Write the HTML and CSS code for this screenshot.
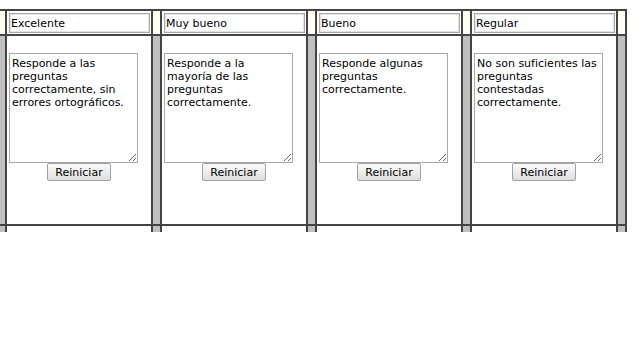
FILE: index.html
```html
<!DOCTYPE html>
<html lang="es">

<head>
    <meta charset="UTF-8" />
    <meta name="viewport" content="width=device-width, initial-scale=1.0" />
    <title>Rúbrica</title>
    <link rel="stylesheet" href="styles.css">
</head>

<body>
    <div class="board">
        <table class="rubric">
            <colgroup>
                <col class="gap" />
                <col class="level" />
                <col class="gap" />
                <col class="level" />
                <col class="gap" />
                <col class="level" />
                <col class="gap" />
                <col class="level" />
                <col class="gap" />
            </colgroup>
            <tr class="rubric-head">
                <td class="gap"></td>
                <td><input type="text" value="Excelente" /></td>
                <td class="gap"></td>
                <td><input type="text" value="Muy bueno" /></td>
                <td class="gap"></td>
                <td><input type="text" value="Bueno" /></td>
                <td class="gap"></td>
                <td><input type="text" value="Regular" /></td>
                <td class="gap"></td>
            </tr>
            <tr class="rubric-body">
                <td class="gap"></td>
                <td>
                    <textarea>Responde a las preguntas correctamente, sin errores ortográficos.</textarea>
                    <div class="reset"><button>Reiniciar</button></div>
                </td>
                <td class="gap"></td>
                <td>
                    <textarea>Responde a la mayoría de las preguntas correctamente.</textarea>
                    <div class="reset"><button>Reiniciar</button></div>
                </td>
                <td class="gap"></td>
                <td>
                    <textarea>Responde algunas preguntas correctamente.</textarea>
                    <div class="reset"><button>Reiniciar</button></div>
                </td>
                <td class="gap"></td>
                <td>
                    <textarea>No son suficientes las preguntas contestadas correctamente.</textarea>
                    <div class="reset"><button>Reiniciar</button></div>
                </td>
                <td class="gap"></td>
            </tr>
            <tr class="rubric-foot">
                <td class="gap"></td>
                <td></td>
                <td class="gap"></td>
                <td></td>
                <td class="gap"></td>
                <td></td>
                <td class="gap"></td>
                <td></td>
                <td class="gap"></td>
            </tr>
        </table>
    </div>
</body>

</html>
```

FILE: styles.css
```css
* {
    box-sizing: border-box;
}

body {
    margin: 0;
    background: #fff;
    font-family: "DejaVu Sans", Verdana, sans-serif;
    font-size: 11px;
}

.board {
    height: 232px;
    overflow: hidden;
}

.rubric {
    margin: 9px 0 0 -4px;
    border-collapse: collapse;
    table-layout: fixed;
    width: 631px;
}

.rubric col.gap {
    width: 9px;
}

.rubric col.level {
    width: 146px;
}

.rubric td {
    border: 2px solid #444;
    padding: 0;
    vertical-align: top;
    background: #fff;
}

.rubric-head td {
    height: 25px;
    padding: 2px 2px 1px 2px;
}

.rubric-head td.gap {
    background: #fffff2;
    padding: 0;
}

.rubric-body td {
    height: 190px;
    padding: 17px 2px 0 2px;
}

.rubric-body td.gap,
.rubric-foot td.gap {
    background: #c0c0c0;
    padding: 0;
}

.rubric-foot td {
    height: 40px;
}

.rubric input {
    display: block;
    width: 141px;
    height: 20px;
    margin: 0;
    padding: 0 1px;
    border: 1px solid #a9a9a9;
    outline: 1px solid #e4e4e4;
    outline-offset: -2px;
    font-family: "DejaVu Sans", Verdana, sans-serif;
    font-size: 11px;
    color: #000;
    background: #fff;
}

.rubric textarea {
    display: block;
    width: 129px;
    height: 110px;
    margin: 0;
    padding: 3px 2px;
    border: 1px solid #a9a9a9;
    font-family: "DejaVu Sans", Verdana, sans-serif;
    font-size: 11px;
    line-height: 13px;
    color: #000;
    resize: both;
    overflow: hidden;
}

.reset {
    text-align: center;
}

.reset button {
    width: 64px;
    height: 18px;
    margin: 0;
    padding: 0;
    border: 1px solid #a0a0a0;
    border-radius: 2px;
    background: linear-gradient(#fbfbfb, #dedede);
    font-family: "DejaVu Sans", Verdana, sans-serif;
    font-size: 11px;
    color: #000;
}
```
